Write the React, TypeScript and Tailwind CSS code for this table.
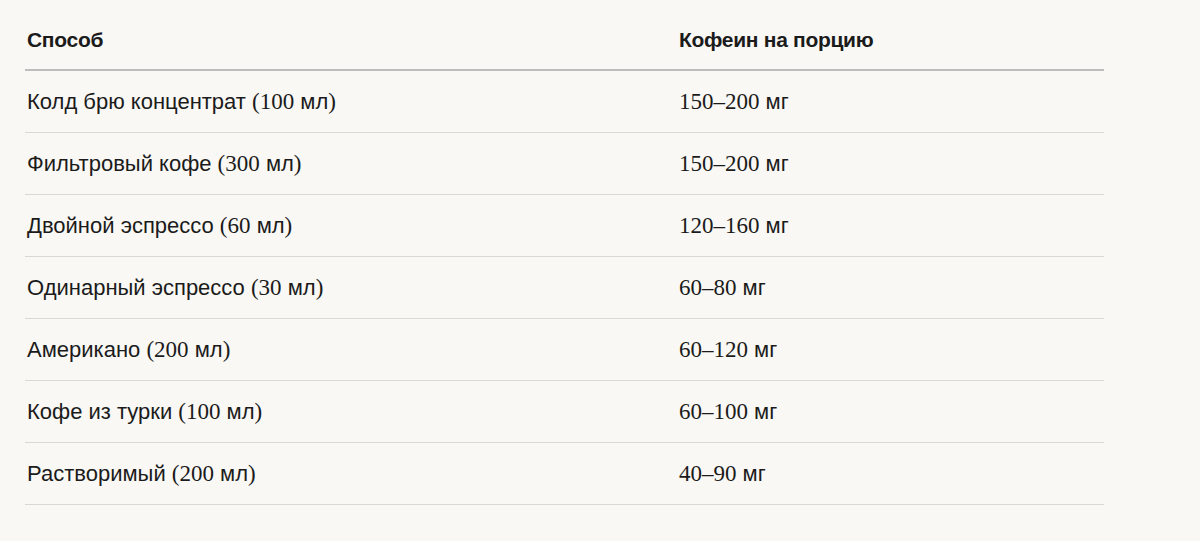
import React from "react";

const rows: [string, string][] = [
  ["Колд брю концентрат (100 мл)", "150–200 мг"],
  ["Фильтровый кофе (300 мл)", "150–200 мг"],
  ["Двойной эспрессо (60 мл)", "120–160 мг"],
  ["Одинарный эспрессо (30 мл)", "60–80 мг"],
  ["Американо (200 мл)", "60–120 мг"],
  ["Кофе из турки (100 мл)", "60–100 мг"],
  ["Растворимый (200 мл)", "40–90 мг"],
];

function Mixed({ text }: { text: string }) {
  const parts = text.split(/([0-9()–]+)/);
  return (
    <>
      {parts.map((p, i) =>
        /^[0-9()–]+$/.test(p) ? (
          <span key={i} className="font-['Liberation_Serif',serif] text-[23px]">
            {p}
          </span>
        ) : (
          <span key={i}>{p}</span>
        )
      )}
    </>
  );
}

export default function App() {
  return (
    <div className="min-h-[541px] w-full bg-[#f9f8f4] text-[#1b1b1b] font-['Liberation_Sans',Arial,sans-serif]">
      <div className="pl-[25px] w-[1104px]">
        <div className="flex border-b-2 border-[#bdbdbb] pt-[26px] pb-[15px] text-[21px] leading-[28px] font-bold tracking-[-0.3px]">
          <div className="w-[652px] pl-[2px]">Способ</div>
          <div className="flex-1 pl-[2px]">Кофеин на порцию</div>
        </div>
        {rows.map(([a, b], i) => (
          <div
            key={i}
            className="flex items-center h-[62px] border-b border-[#d9d8d4] text-[22px] leading-[28px]"
          >
            <div className="w-[652px] pl-[2px]">
              <Mixed text={a} />
            </div>
            <div className="flex-1 pl-[2px]">
              <Mixed text={b} />
            </div>
          </div>
        ))}
      </div>
    </div>
  );
}
